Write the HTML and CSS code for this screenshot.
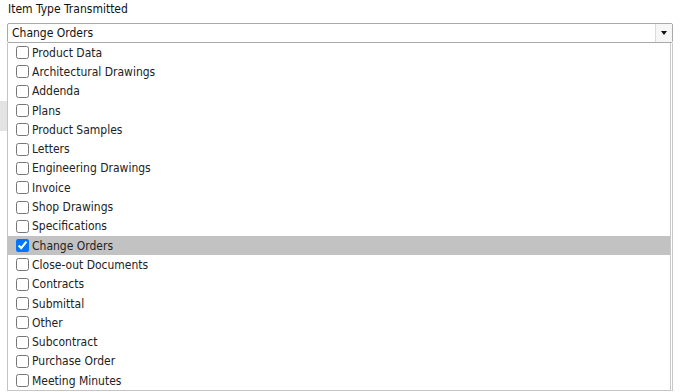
FILE: index.html
```html
<!DOCTYPE html>
<html lang="en">
<head>
    <meta charset="UTF-8">
    <meta name="viewport" content="width=device-width, initial-scale=1.0">
    <title>Item Type Transmitted</title>
    <link rel="stylesheet" href="styles.css">
</head>
<body>

    <div class="form-page">
        <!-- Item type field -->
        <div class="form-field">
            <label class="field-label">Item Type Transmitted</label>
            <div class="select-box">
                <div class="select-value">Change Orders</div>
                <div class="select-arrow"><span class="arrow-down"></span></div>
            </div>

            <!-- Open dropdown list -->
            <ul class="option-list">
                <li class="option"><input type="checkbox"><span>Product Data</span></li>
                <li class="option"><input type="checkbox"><span>Architectural Drawings</span></li>
                <li class="option"><input type="checkbox"><span>Addenda</span></li>
                <li class="option"><input type="checkbox"><span>Plans</span></li>
                <li class="option"><input type="checkbox"><span>Product Samples</span></li>
                <li class="option"><input type="checkbox"><span>Letters</span></li>
                <li class="option"><input type="checkbox"><span>Engineering Drawings</span></li>
                <li class="option"><input type="checkbox"><span>Invoice</span></li>
                <li class="option"><input type="checkbox"><span>Shop Drawings</span></li>
                <li class="option"><input type="checkbox"><span>Specifications</span></li>
                <li class="option selected"><input type="checkbox" checked><span>Change Orders</span></li>
                <li class="option"><input type="checkbox"><span>Close-out Documents</span></li>
                <li class="option"><input type="checkbox"><span>Contracts</span></li>
                <li class="option"><input type="checkbox"><span>Submittal</span></li>
                <li class="option"><input type="checkbox"><span>Other</span></li>
                <li class="option"><input type="checkbox"><span>Subcontract</span></li>
                <li class="option"><input type="checkbox"><span>Purchase Order</span></li>
                <li class="option"><input type="checkbox"><span>Meeting Minutes</span></li>
            </ul>
        </div>

        <!-- Panel underneath the dropdown -->
        <div class="under-panel"></div>
    </div>

</body>
</html>
```
FILE: styles.css
```css
html, body {
    height: 100%;
}

body {
    font-family: "DejaVu Sans Condensed", "DejaVu Sans", sans-serif;
    font-size: 12px;
    color: #222;
    margin: 0;
    padding: 0;
    background-color: white;
    overflow: hidden;
}

.form-page {
    height: 100%;
    box-sizing: border-box;
    padding: 2px 9px 0 7px;
}

.form-field {
    position: relative;
}

.field-label {
    display: block;
    height: 21px;
    line-height: 15px;
    padding-left: 1px;
    color: #111;
}

.select-box {
    display: flex;
    height: 18px;
    border: 1px solid #a9a9a9;
    border-radius: 2px;
    background-color: white;
}

.select-value {
    flex: 1;
    line-height: 18px;
    padding-left: 4px;
    color: #111;
}

.select-arrow {
    width: 16px;
    border-left: 1px solid #d9d9d9;
    background-color: #f6f6f6;
    display: flex;
    align-items: center;
    justify-content: center;
}

.arrow-down {
    width: 0;
    height: 0;
    border-left: 3.5px solid transparent;
    border-right: 3.5px solid transparent;
    border-top: 4px solid #111;
}

.option-list {
    position: absolute;
    top: 41px;
    left: 0;
    right: 0;
    z-index: 2;
    list-style: none;
    margin: 0;
    padding: 0;
    background-color: white;
    border: 1px solid #c4c4c4;
    border-top: none;
    border-right: 3px double #c8c8c8;
}

.option {
    display: flex;
    align-items: center;
    height: 19.3px;
    padding-left: 5px;
    white-space: nowrap;
}

.option input {
    width: 13px;
    height: 13px;
    margin: 0 3px 0 3px;
}

.option.selected {
    background-color: #c2c2c2;
}

.under-panel {
    width: 60%;
    height: 30px;
    margin: 58px 0 0 -7px;
    background-color: #e3e3e3;
}
```
